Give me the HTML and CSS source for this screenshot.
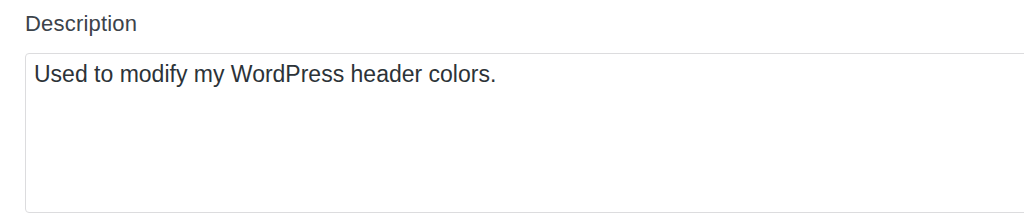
FILE: index.html
```html
<!DOCTYPE html>
<html lang="en">
<head>
    <meta charset="UTF-8">
    <meta name="viewport" content="width=device-width, initial-scale=1.0">
    <title>Description</title>
    <link rel="stylesheet" href="styles.css">
</head>
<body>
    <div class="field">
        <label class="field-label" for="description">Description</label>
        <textarea id="description" class="field-input" rows="4">Used to modify my WordPress header colors.</textarea>
    </div>
</body>
</html>
```

FILE: styles.css
```css
body {
    font-family: "Liberation Sans", Arial, sans-serif;
    background-color: #fff;
    color: #2c3338;
    margin: 0;
    overflow: hidden;
}
.field {
    padding: 11px 0 0 25px;
    display: flex;
    flex-direction: column;
    align-items: flex-start;
}
.field-label {
    font-size: 22px;
    line-height: 26px;
    color: #3c434a;
    letter-spacing: 0.2px;
    margin-bottom: 16px;
}
.field-input {
    box-sizing: border-box;
    width: 1010px;
    height: 160px;
    margin: 0;
    padding: 4px 8px;
    font-family: inherit;
    font-size: 23px;
    line-height: 32px;
    color: #2c3338;
    background-color: #fff;
    border: 1px solid #dcdcde;
    border-radius: 4px;
    resize: none;
    outline: none;
}
```
